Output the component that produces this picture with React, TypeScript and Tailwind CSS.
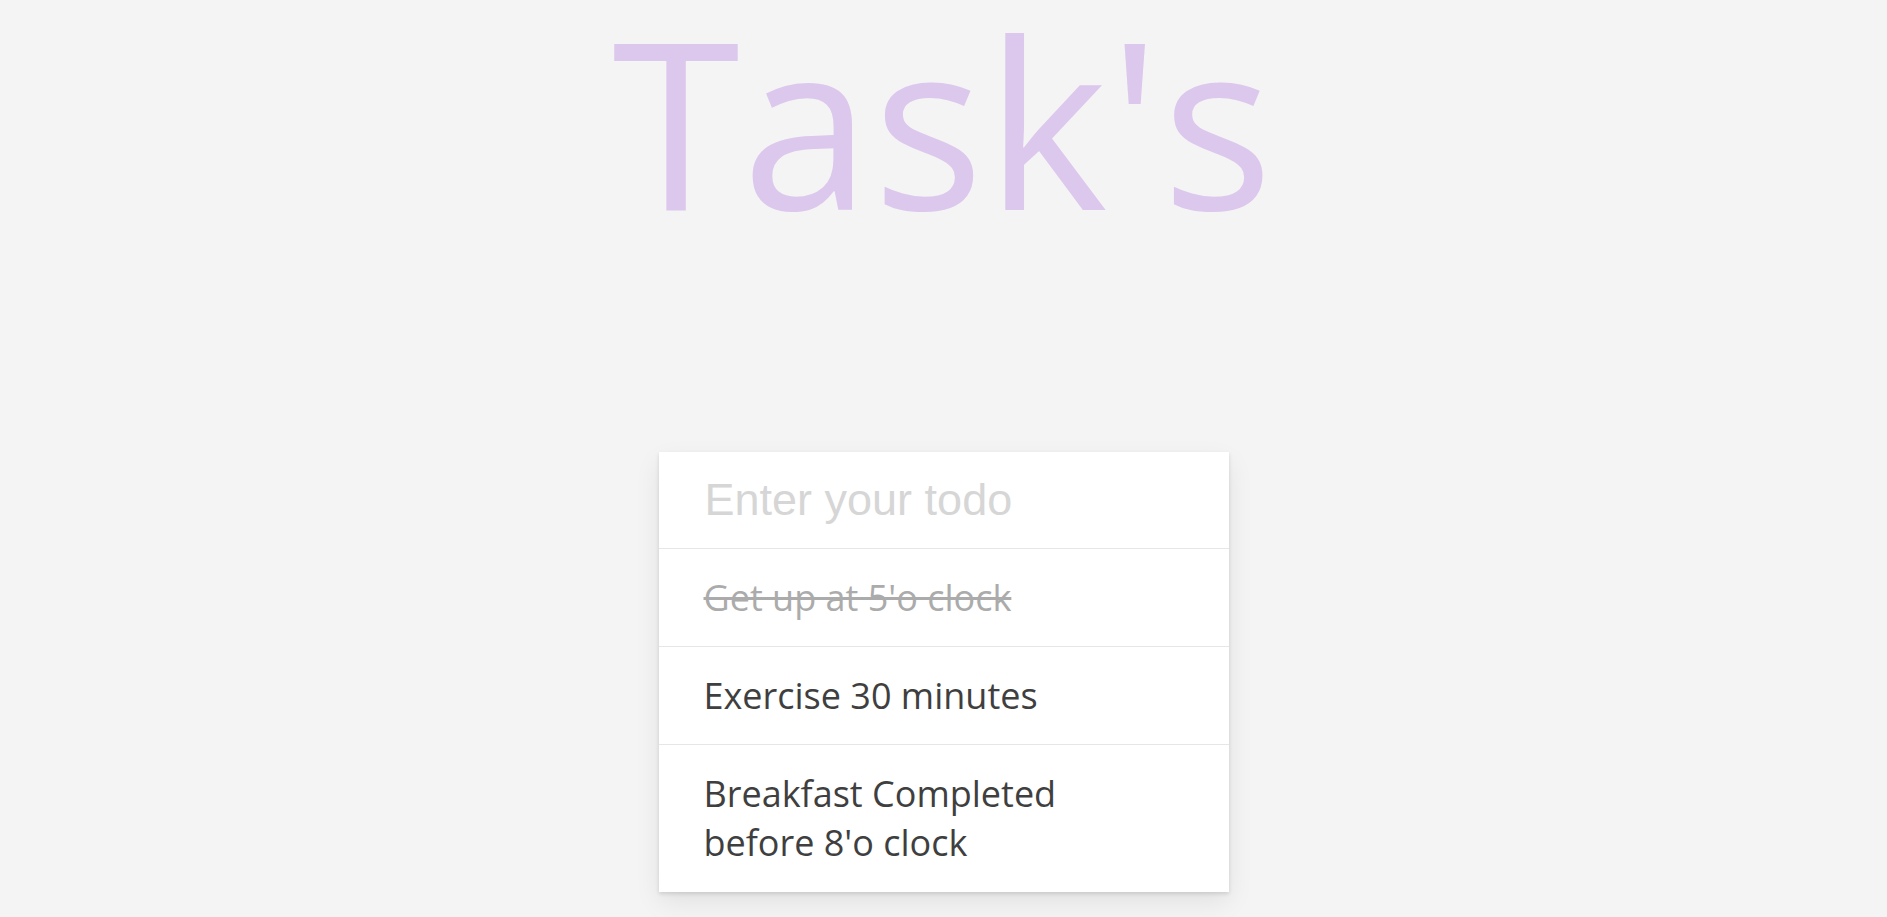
import { useState } from "react";

type Todo = {
  id: number;
  text: string;
  done: boolean;
};

const initialTodos: Todo[] = [
  { id: 1, text: "Get up at 5'o clock", done: true },
  { id: 2, text: "Exercise 30 minutes", done: false },
  { id: 3, text: "Breakfast Completed before 8'o clock", done: false },
];

export default function App() {
  const [todos, setTodos] = useState<Todo[]>(initialTodos);
  const [value, setValue] = useState("");

  const toggle = (id: number) =>
    setTodos((list) => list.map((t) => (t.id === id ? { ...t, done: !t.done } : t)));

  return (
    <div className="min-h-screen w-full bg-[#f4f4f4] flex flex-col items-center font-['Open_Sans',sans-serif]">
      <h1 className="text-[232px] leading-[240px] tracking-[2px] font-normal text-[#dcc7ed] text-center select-none">
        Task's
      </h1>

      <div className="mt-[212px] w-[570px] bg-white flex flex-col shadow-[0_2px_4px_rgba(0,0,0,0.12),0_10px_24px_rgba(0,0,0,0.08)]">
        <form
          onSubmit={(e) => {
            e.preventDefault();
            if (!value.trim()) return;
            setTodos((list) => [...list, { id: Date.now(), text: value, done: false }]);
            setValue("");
          }}
        >
          <input
            value={value}
            onChange={(e) => setValue(e.target.value)}
            placeholder="Enter your todo"
            className="w-full h-[97px] pl-[46px] pr-6 bg-transparent outline-none border-b border-[#e6e6e6] font-['Liberation_Sans',Arial,sans-serif] text-[45px] text-[#444] placeholder:text-[#d6d6d6]"
          />
        </form>

        <ul className="flex flex-col">
          {todos.map((todo, i) => {
            const last = i === todos.length - 1;
            return (
              <li
                key={todo.id}
                onClick={() => toggle(todo.id)}
                className={
                  "pl-[45px] pr-6 pt-6 cursor-pointer text-[36px] leading-[49px] " +
                  (last ? "pb-[25px]" : "pb-6 border-b border-[#e6e6e6]")
                }
              >
                <span
                  className={
                    "block max-w-[400px] " +
                    (todo.done ? "line-through text-[#ababab]" : "text-[#3f3f3f]")
                  }
                >
                  {todo.text}
                </span>
              </li>
            );
          })}
        </ul>
      </div>
    </div>
  );
}
